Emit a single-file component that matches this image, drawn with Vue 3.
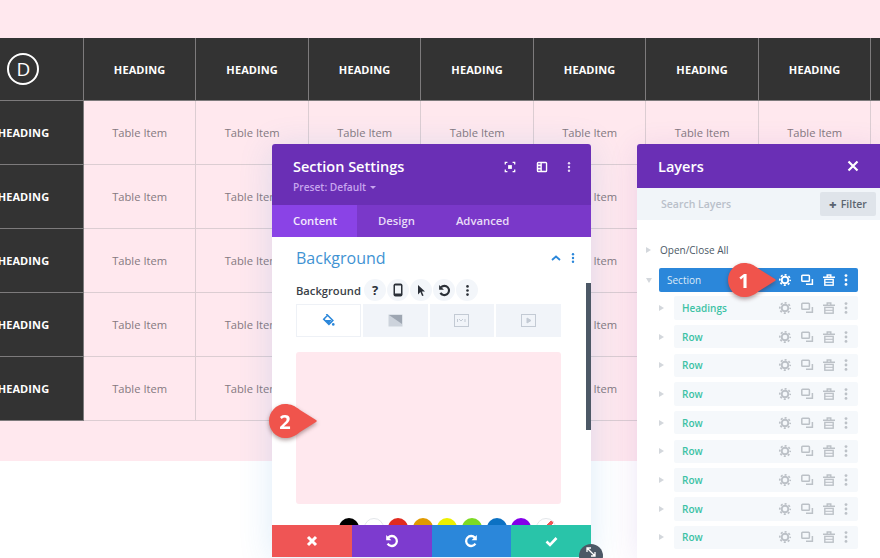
<script setup>
const columns = Array.from({ length: 8 }, (_, i) => i)
const tableRows = Array.from({ length: 5 }, (_, i) => i)
const layerRows = ['Headings', 'Row', 'Row', 'Row', 'Row', 'Row', 'Row', 'Row', 'Row']
const colors = ['#000000', '#ffffff', '#e02b20', '#e09900', '#edf000', '#7cda24', '#0c71c3', '#8300e9']
</script>

<template>
  <div class="page">
    <svg class="defs" width="0" height="0" aria-hidden="true">
      <symbol id="i-gear" viewBox="0 0 14 14">
        <circle cx="7" cy="7" r="3.3" fill="none" stroke="currentColor" stroke-width="1.9" />
        <circle cx="7" cy="7" r="5.2" fill="none" stroke="currentColor" stroke-width="1.7" stroke-dasharray="2.04 2.04" stroke-dashoffset="1" />
      </symbol>
      <symbol id="i-dup" viewBox="0 0 14 14">
        <rect x="1.8" y="2.2" width="7.6" height="6" rx="0.8" fill="none" stroke="currentColor" stroke-width="1.5" />
        <path d="M12.4 6v5.2H6" fill="none" stroke="currentColor" stroke-width="1.5" />
      </symbol>
      <symbol id="i-trash" viewBox="0 0 14 14">
        <path d="M1 4.200h12M5.200 3.800V2h3.600v1.800" fill="none" stroke="currentColor" stroke-width="1.400" />
        <rect x="2.800" y="6.400" width="8.400" height="5.800" fill="none" stroke="currentColor" stroke-width="1.400" />
        <path d="M3 9.300h8" stroke="currentColor" stroke-width="1.100" />
      </symbol>
      <symbol id="i-dots" viewBox="0 0 14 14">
        <circle cx="7" cy="2.6" r="1.4" fill="currentColor" />
        <circle cx="7" cy="7" r="1.4" fill="currentColor" />
        <circle cx="7" cy="11.4" r="1.4" fill="currentColor" />
      </symbol>
      <symbol id="i-undo" viewBox="0 0 14 14">
        <path d="M3.200 3.600A5 5 0 1 1 2.600 9.600" fill="none" stroke="currentColor" stroke-width="2.300" />
        <path d="M1.200 1v5.200H6.400z" fill="currentColor" />
      </symbol>
      <symbol id="i-redo" viewBox="0 0 14 14">
        <path d="M10.800 3.600A5 5 0 1 0 11.400 9.600" fill="none" stroke="currentColor" stroke-width="2.300" />
        <path d="M12.800 1v5.200H7.600z" fill="currentColor" />
      </symbol>
    </svg>

    <section class="band">
      <div class="table">
        <div class="cell dark">
          <div class="logo">D</div>
        </div>
        <div v-for="c in columns" :key="'h' + c" class="cell dark head">HEADING</div>
        <template v-for="r in tableRows" :key="'r' + r">
          <div class="cell dark head">HEADING</div>
          <div v-for="c in columns" :key="c" class="cell item">Table Item</div>
        </template>
      </div>
    </section>

    <aside class="settings">
      <header class="set-head">
        <div>
          <div class="set-title">Section Settings</div>
          <div class="set-preset">Preset: Default <span class="caret"></span></div>
        </div>
        <div class="set-actions">
          <svg width="12" height="12" viewBox="0 0 14 14" fill="none" stroke="#fff" stroke-width="1.500">
            <path d="M1.500 4V1.500H4M10 1.500h2.500V4M12.500 10v2.500H10M4 12.500H1.500V10" />
            <rect x="4.800" y="4.800" width="4.400" height="4.400" fill="#fff" stroke="none" />
          </svg>
          <svg class="act-2" width="12" height="12" viewBox="0 0 14 14" fill="none">
            <rect x="1.700" y="1.700" width="10.600" height="10.600" rx="1" stroke="#fff" stroke-width="1.600" />
            <path d="M6 2v10" stroke="#fff" stroke-width="1.600" />
            <path d="M2 4h4v2H2zM2 8h4v2H2z" fill="#fff" />
          </svg>
          <svg class="act-3" width="12" height="12"><use href="#i-dots" /></svg>
        </div>
      </header>
      <nav class="set-tabs">
        <span class="tab active">Content</span>
        <span class="tab tab-design">Design</span>
        <span class="tab tab-adv">Advanced</span>
      </nav>
      <div class="set-body">
        <div class="group-head">
          <span class="group-title">Background</span>
          <svg class="chev" width="12" height="8" viewBox="0 0 12 8" fill="none"><path d="M2 6l4-3.500L10 6" stroke="#2b87da" stroke-width="1.800" /></svg>
          <svg class="group-dots" width="12" height="12"><use href="#i-dots" /></svg>
        </div>
        <div class="field-row">
          <span class="field-label">Background</span>
          <span class="tool">?</span>
          <span class="tool">
            <svg width="12" height="14" viewBox="0 0 12 14"><rect x="1.500" y="0.500" width="9" height="13" rx="2" fill="#2b3038" /><rect x="3" y="2.500" width="6" height="8" fill="#f1f5f9" /></svg>
          </span>
          <span class="tool">
            <svg width="12" height="13" viewBox="0 0 12 13"><path d="M3 1l7 6.500H6.800l1.800 4-1.500.6-1.700-4L3 10.500z" fill="#2b3038" /></svg>
          </span>
          <span class="tool"><svg width="13" height="13"><use href="#i-undo" /></svg></span>
          <span class="tool"><svg width="13" height="13"><use href="#i-dots" /></svg></span>
        </div>
        <div class="bg-tabs">
          <span class="bg-tab on">
            <svg width="13" height="13" viewBox="0 0 15 15"><path d="M6.500 1.500l6 6-4.500 4.500-6-6zM6.500 1.500L5 0" fill="none" stroke="#2b87da" stroke-width="1.800" /><path d="M3 7h8l-3 4.500z" fill="#2b87da" /><circle cx="13" cy="12" r="1.500" fill="#2b87da" /></svg>
          </span>
          <span class="bg-tab">
            <svg width="15" height="13" viewBox="0 0 15 13"><rect x="0.500" y="0.500" width="14" height="12" fill="#cdd3dc" /><path d="M1 1h13v9z" fill="#9ea6b2" /></svg>
          </span>
          <span class="bg-tab">
            <svg width="15" height="13" viewBox="0 0 15 13" fill="none" stroke="#c3cad4"><rect x="0.500" y="0.500" width="14" height="12" /><path d="M3.500 5v3M5 5l2 2 2-2M11 5v3" /></svg>
          </span>
          <span class="bg-tab">
            <svg width="15" height="13" viewBox="0 0 15 13" fill="none" stroke="#c3cad4"><rect x="0.500" y="0.500" width="14" height="12" /><path d="M6 4l4 2.500L6 9z" fill="#c3cad4" /></svg>
          </span>
        </div>
        <div class="swatch"></div>
        <div class="palette">
          <span v-for="col in colors" :key="col" class="dot" :class="{ ring: col === '#ffffff' }" :style="{ background: col }"></span>
          <span class="dot ring slash"></span>
        </div>
        <div class="scrollbar"></div>
      </div>
      <footer class="set-foot">
        <span class="foot red">
          <svg width="12" height="12" viewBox="0 0 12 12"><path d="M2 2l8 8M10 2l-8 8" stroke="#fff" stroke-width="3" /></svg>
        </span>
        <span class="foot purple"><svg width="14" height="14"><use href="#i-undo" /></svg></span>
        <span class="foot blue"><svg width="14" height="14"><use href="#i-redo" /></svg></span>
        <span class="foot green">
          <svg width="13" height="11" viewBox="0 0 13 11"><path d="M1.500 5.500l3.500 3.500 6.500-7" fill="none" stroke="#fff" stroke-width="2.600" /></svg>
        </span>
      </footer>
      <span class="resize">
        <svg width="12" height="12" viewBox="0 0 12 12"><path d="M2.500 2.500l7 7M2 6V2h4M10 6v4H6" fill="none" stroke="#fff" stroke-width="1.300" /></svg>
      </span>
    </aside>

    <aside class="layers">
      <header class="lay-head">
        <span class="lay-title">Layers</span>
        <svg width="12" height="12" viewBox="0 0 12 12"><path d="M1.500 1.500l9 9M10.500 1.500l-9 9" stroke="#fff" stroke-width="2.200" /></svg>
      </header>
      <div class="lay-search">
        <span class="search-text">Search Layers</span>
        <span class="filter"><b>+</b> Filter</span>
      </div>
      <div class="lay-list">
        <div class="open-all"><span class="tri"></span>Open/Close All</div>
        <div class="sec-line">
          <span class="tri down"></span>
          <div class="sec-row">
            <span class="sec-name">Section</span>
            <span class="lay-icons">
              <svg width="14" height="14"><use href="#i-gear" /></svg>
              <svg width="14" height="14"><use href="#i-dup" /></svg>
              <svg width="14" height="14"><use href="#i-trash" /></svg>
              <svg class="last" width="14" height="14"><use href="#i-dots" /></svg>
            </span>
          </div>
        </div>
        <div v-for="(name, i) in layerRows" :key="i" class="row-line">
          <span class="tri small"></span>
          <div class="lay-row">
            <span class="row-name">{{ name }}</span>
            <span class="lay-icons">
              <svg width="14" height="14"><use href="#i-gear" /></svg>
              <svg width="14" height="14"><use href="#i-dup" /></svg>
              <svg width="14" height="14"><use href="#i-trash" /></svg>
              <svg class="last" width="14" height="14"><use href="#i-dots" /></svg>
            </span>
          </div>
        </div>
      </div>
    </aside>

    <svg class="badge b1" width="54" height="40" viewBox="0 0 54 40">
      <path d="M18 3C24 3 28 5 33 9L49 19Q50.500 20 49 21L33 31C28 35 24 37 18 37C9 37 2 29 2 20C2 11 9 3 18 3Z" fill="#f0544c" />
      <text x="18" y="27.500" text-anchor="middle">1</text>
    </svg>
    <svg class="badge b2" width="54" height="40" viewBox="0 0 54 40">
      <path d="M18 3C24 3 28 5 33 9L49 19Q50.500 20 49 21L33 31C28 35 24 37 18 37C9 37 2 29 2 20C2 11 9 3 18 3Z" fill="#f0544c" />
      <text x="18" y="27.500" text-anchor="middle">2</text>
    </svg>
  </div>
</template>

<style>
html, body { margin: 0; padding: 0; background: #fff; }
</style>

<style scoped>
.page {
  position: relative;
  width: 880px;
  height: 558px;
  overflow: hidden;
  background: #fff;
  font-family: "Open Sans", "Liberation Sans", sans-serif;
}
.defs { position: absolute; }

.band {
  height: 461px;
  box-sizing: border-box;
  padding-top: 38px;
  background: #ffe8ee;
  overflow: hidden;
}
.table {
  display: grid;
  grid-template-columns: 119.9px repeat(8, 112.5px);
  grid-template-rows: 63px repeat(5, 64px);
  margin-left: -36px;
  width: 1020px;
}
.cell {
  display: flex;
  align-items: center;
  justify-content: center;
  box-sizing: border-box;
  border-right: 1px solid #dccdd2;
  border-bottom: 1px solid #dccdd2;
}
.dark {
  background: #333333;
  color: #fff;
  border-color: #7d7b7c;
}
.head { font-size: 11px; font-weight: 700; letter-spacing: 0.1px; }
.item { font-size: 11.200px; color: #857980; }
.logo {
  width: 32px;
  height: 32px;
  box-sizing: border-box;
  border: 2px solid #fff;
  border-radius: 50%;
  display: flex;
  align-items: center;
  justify-content: center;
  font-size: 19px;
  line-height: 1;
  color: #fff;
}

.settings {
  position: absolute;
  left: 272px;
  top: 144px;
  width: 319px;
  height: 413px;
  display: flex;
  flex-direction: column;
  background: #fff;
  border-radius: 3px 3px 0 0;
  box-shadow: 0 4px 34px rgba(43, 135, 218, 0.16);
}
.set-head {
  height: 61px;
  flex: none;
  box-sizing: border-box;
  padding: 13px 16px 0 21px;
  display: flex;
  justify-content: space-between;
  background: #6a2fb5;
  border-radius: 3px 3px 0 0;
}
.set-title { font-size: 14.500px; font-weight: 600; color: #fff; line-height: 20px; }
.set-preset { font-size: 10.200px; font-weight: 600; color: #c7a5ee; line-height: 14px; margin-top: 3px; }
.caret {
  display: inline-block;
  width: 0;
  height: 0;
  margin-left: 1px;
  vertical-align: 2px;
  border: 3px solid transparent;
  border-top-color: #c7a5ee;
  border-bottom: 0;
}
.set-actions { display: flex; padding-top: 4px; align-items: flex-start; }
.act-2 { margin-left: 20px; }
.act-3 { margin-left: 15px; color: #e6d8f7; }
.set-tabs {
  height: 32px;
  flex: none;
  display: flex;
  background: #7a38c9;
}
.tab {
  font-size: 11.300px;
  font-weight: 600;
  color: #e8dcf7;
  line-height: 31px;
}
.tab.active {
  width: 85px;
  box-sizing: border-box;
  padding-left: 21px;
  background: #8a43e6;
  color: #f3eafd;
}
.tab-design { margin-left: 21px; }
.tab-adv { margin-left: 41px; }
.set-body {
  position: relative;
  flex: 1;
  min-height: 0;
  box-sizing: border-box;
  padding: 0 30px 0 24px;
  overflow: hidden;
}
.group-head {
  height: 41px;
  display: flex;
  align-items: center;
  color: #4c5866;
}
.group-title { font-size: 16px; color: #3f93d3; flex: 1; }
.chev { margin-right: 6px; transform: translateX(19px); }
.group-dots { color: #2b87da; transform: translateX(18px); }
.field-row {
  height: 24px;
  display: flex;
  align-items: center;
  gap: 1px;
  color: #2b3038;
}
.field-label { font-size: 11.200px; font-weight: 600; width: 67px; color: #3a3f47; flex: none; }
.tool {
  width: 22px;
  height: 22px;
  border-radius: 50%;
  background: #f3f6fa;
  display: flex;
  align-items: center;
  justify-content: center;
  font-size: 13px;
  font-weight: 700;
  flex: none;
}
.bg-tabs {
  display: grid;
  grid-template-columns: repeat(4, 1fr);
  gap: 2px;
  height: 33px;
  margin-top: 2px;
}
.bg-tab {
  display: flex;
  align-items: center;
  justify-content: center;
  background: #f1f4f9;
}
.bg-tab.on {
  background: #fff;
  box-shadow: inset 0 0 0 1px #eef1f6;
}
.swatch {
  height: 152px;
  margin-top: 15px;
  border-radius: 3px;
  background: #ffe8ee;
}
.palette {
  display: flex;
  gap: 4.600px;
  margin: 14px 0 0 43px;
}
.dot {
  width: 20px;
  height: 20px;
  border-radius: 50%;
  flex: none;
  box-sizing: border-box;
}
.ring { border: 1px solid #e3e6ea; background: #fff; }
.slash { background: linear-gradient(135deg, #fff 42%, #ef5555 42%, #ef5555 56%, #fff 56%); }
.scrollbar {
  position: absolute;
  right: 0;
  top: 46px;
  width: 5px;
  height: 147px;
  background: #4c5866;
}
.set-foot {
  height: 32px;
  flex: none;
  display: grid;
  grid-template-columns: repeat(4, 1fr);
  color: #fff;
}
.foot { display: flex; align-items: center; justify-content: center; }
.red { background: #ef5555; }
.purple { background: #7d3bcf; }
.blue { background: #2b87da; }
.green { background: #29c4a9; }
.resize {
  position: absolute;
  left: 307px;
  top: 400px;
  width: 24px;
  height: 24px;
  border-radius: 50%;
  background: #4c5866;
  display: flex;
  align-items: flex-start;
  justify-content: center;
  padding-top: 2px;
  box-sizing: border-box;
}

.layers {
  position: absolute;
  left: 637px;
  top: 144px;
  width: 243px;
  height: 414px;
  background: #fff;
  border-radius: 3px 0 0 0;
  box-shadow: 0 4px 30px rgba(106, 47, 181, 0.12);
}
.lay-head {
  height: 44px;
  box-sizing: border-box;
  padding: 0 21px;
  display: flex;
  align-items: center;
  justify-content: space-between;
  background: #6a2fb5;
  border-radius: 3px 0 0 0;
}
.lay-title { font-size: 14.500px; font-weight: 600; color: #fff; }
.lay-search {
  height: 32px;
  box-sizing: border-box;
  padding: 4px 4px 4px 24px;
  display: flex;
  align-items: center;
  justify-content: space-between;
  background: #f1f5f9;
}
.search-text { font-size: 10.500px; font-weight: 600; color: #b9c0ca; }
.filter {
  width: 56px;
  height: 24px;
  border-radius: 2px;
  background: #dfe4ea;
  color: #5b6570;
  font-size: 10.500px;
  font-weight: 600;
  display: flex;
  align-items: center;
  justify-content: center;
  gap: 4px;
}
.filter b { font-size: 13px; line-height: 1; }
.lay-list { padding: 20px 22px 0 0; }
.open-all {
  height: 20px;
  display: flex;
  align-items: center;
  font-size: 10px;
  font-weight: 500;
  color: #4c5866;
  padding-left: 9px;
}
.open-all .tri { margin-right: 9px; }
.tri {
  width: 0;
  height: 0;
  flex: none;
  border-left: 5px solid #d3d7dc;
  border-top: 3.500px solid transparent;
  border-bottom: 3.500px solid transparent;
}
.tri.down {
  border-left: 3.500px solid transparent;
  border-right: 3.500px solid transparent;
  border-top: 5px solid #d3d7dc;
  border-bottom: 0;
}
.sec-line {
  display: flex;
  align-items: center;
  margin-top: 8px;
  margin-bottom: -1px;
  padding-left: 9px;
}
.sec-line .tri { margin-right: 7px; }
.sec-row {
  flex: 1;
  height: 24px;
  box-sizing: border-box;
  padding: 0 5px 0 8px;
  display: flex;
  align-items: center;
  justify-content: space-between;
  background: #2b87da;
  border-radius: 2px;
  color: #fff;
}
.sec-name { font-size: 10px; font-weight: 400; color: #dceaf8; }
.lay-icons { display: flex; gap: 8px; align-items: center; }
.lay-icons .last { margin-left: -5px; }
.row-line {
  display: flex;
  align-items: center;
  margin-top: 5.200px;
  padding-left: 22px;
}
.row-line .tri { margin-right: 10px; }
.lay-row {
  flex: 1;
  height: 23.500px;
  box-sizing: border-box;
  padding: 0 5px 0 8px;
  display: flex;
  align-items: center;
  justify-content: space-between;
  background: #f5f8fb;
  border-radius: 2px;
  color: #bcc1c7;
}
.row-name { font-size: 10px; font-weight: 600; color: #3cc2a5; }

.badge {
  position: absolute;
  filter: drop-shadow(0 2px 2px rgba(80, 40, 40, 0.45));
  overflow: visible;
}
.badge text {
  font-family: "Open Sans", "Liberation Sans", sans-serif;
  font-size: 20px;
  font-weight: 700;
  fill: #fff;
}
.b1 { left: 726px; top: 260px; }
.b2 { left: 267px; top: 401px; }
</style>
